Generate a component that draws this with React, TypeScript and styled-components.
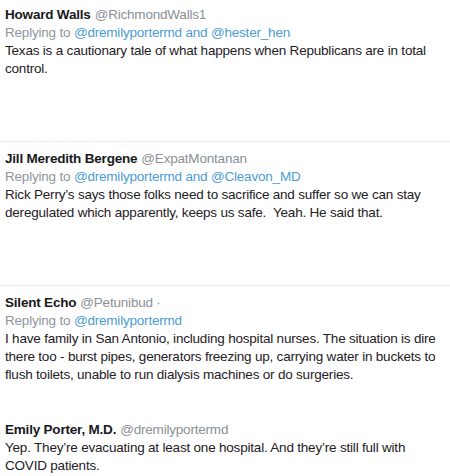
import React from "react";
import styled, { createGlobalStyle } from "styled-components";

const Global = createGlobalStyle`
  html, body { margin: 0; padding: 0; background: #ffffff; }
  body { font-family: "Liberation Sans", Arial, sans-serif; -webkit-font-smoothing: antialiased; }
`;

const Page = styled.div`
  width: 450px;
  height: 476px;
  overflow: hidden;
  background: #ffffff;
  display: flex;
  flex-direction: column;
`;

const Tweet = styled.div<{ $pt: number; $h?: number; $sep?: boolean }>`
  padding: ${(p) => p.$pt}px 12px 0 5px;
  ${(p) => (p.$h ? `height: ${p.$h}px;` : "")}
  box-sizing: border-box;
  border-bottom: ${(p) => (p.$sep ? "1px solid #ebedee" : "none")};
  font-size: 13.5px;
  letter-spacing: -0.2px;
  line-height: 18px;
  color: #1c1e21;
`;

const Header = styled.div`
  white-space: nowrap;
`;

const Name = styled.span`
  font-weight: 700;
  color: #17191c;
`;

const Handle = styled.span`
  color: #8b9096;
  margin-left: 4px;
`;

const Reply = styled.div`
  color: #8f959b;
`;

const Mention = styled.span`
  color: #4c9cd3;
`;

const Body = styled.div`
  color: #1e2024;
`;

export default function App() {
  return (
    <Page>
      <Global />
      <Tweet $pt={6} $h={142} $sep>
        <Header>
          <Name>Howard Walls</Name>
          <Handle>@RichmondWalls1</Handle>
        </Header>
        <Reply>
          Replying to <Mention>@dremilyportermd and @hester_hen</Mention>
        </Reply>
        <Body>
          Texas is a cautionary tale of what happens when Republicans are in total control.
        </Body>
      </Tweet>
      <Tweet $pt={8} $h={144} $sep>
        <Header>
          <Name>Jill Meredith Bergene</Name>
          <Handle>@ExpatMontanan</Handle>
        </Header>
        <Reply>
          Replying to <Mention>@dremilyportermd and @Cleavon_MD</Mention>
        </Reply>
        <Body>
          Rick Perry’s says those folks need to sacrifice and suffer so we can stay deregulated which apparently, keeps us safe.&nbsp; Yeah. He said that.
        </Body>
      </Tweet>
      <Tweet $pt={8} $h={135}>
        <Header>
          <Name>Silent Echo</Name>
          <Handle>@Petunibud ·</Handle>
        </Header>
        <Reply>
          Replying to <Mention>@dremilyportermd</Mention>
        </Reply>
        <Body>
          I have family in San Antonio, including hospital nurses. The situation is dire there too - burst pipes, generators freezing up, carrying water in buckets to flush toilets, unable to run dialysis machines or do surgeries.
        </Body>
      </Tweet>
      <Tweet $pt={0}>
        <Header>
          <Name>Emily Porter, M.D.</Name>
          <Handle>@dremilyportermd</Handle>
        </Header>
        <Body>
          Yep. They’re evacuating at least one hospital. And they’re still full with COVID patients.
        </Body>
      </Tweet>
    </Page>
  );
}
